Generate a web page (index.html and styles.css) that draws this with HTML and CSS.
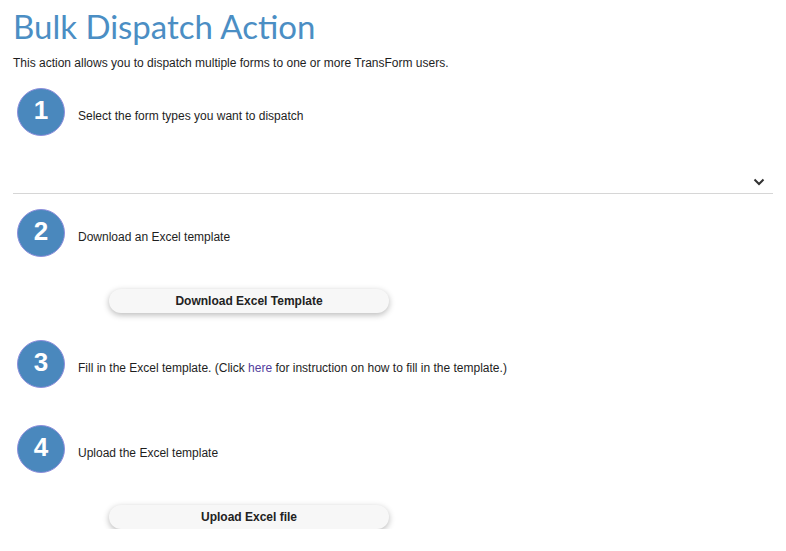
FILE: index.html
```html
<!DOCTYPE html>
<html>
<head>
<meta charset="utf-8">
<link rel="stylesheet" href="styles.css">
</head>
<body>
<h1 class="title">Bulk Dispatch Action</h1>
<p class="intro">This action allows you to dispatch multiple forms to one or more TransForm users.</p>

<div class="step step-1">
  <div class="num">1</div>
  <div class="label">Select the form types you want to dispatch</div>
</div>
<div class="select">
  <svg class="chev" width="12" height="8" viewBox="0 0 12 8"><path d="M1.5 1.5 L6 6 L10.5 1.5" fill="none" stroke="#333" stroke-width="2"/></svg>
</div>

<div class="step step-2">
  <div class="num">2</div>
  <div class="label">Download an Excel template</div>
</div>
<div class="btn-wrap btn-wrap-1"><button class="btn">Download Excel Template</button></div>

<div class="step step-3">
  <div class="num">3</div>
  <div class="label">Fill in the Excel template. (Click <a class="link" href="#">here</a> for instruction on how to fill in the template.)</div>
</div>

<div class="step step-4">
  <div class="num">4</div>
  <div class="label">Upload the Excel template</div>
</div>
<div class="btn-wrap btn-wrap-2"><button class="btn">Upload Excel file</button></div>
</body>
</html>
```
FILE: styles.css
```css
html, body { background: #fff; }
body {
  margin: 0;
  padding: 6px 13px 0 13px;
  font-family: "Liberation Sans", Arial, sans-serif;
  font-size: 12px;
  color: #1e1e1e;
}
.title {
  margin: 0;
  font-family: Lato, "Segoe UI", sans-serif;
  font-weight: normal;
  font-size: 33px;
  line-height: 40px;
  color: #4b8ec4;
}
.intro {
  margin: 9px 0 0 0;
  line-height: 16px;
}
.step {
  display: flex;
  align-items: center;
  gap: 13px;
  padding-left: 4px;
}
.step-1 { margin-top: 17px; }
.step-2 { margin-top: 15px; }
.step-3 { margin-top: 27px; }
.step-4 { margin-top: 37px; }
.num {
  width: 46px;
  height: 43px;
  padding-bottom: 3px;
  border-radius: 50%;
  background: #4a88bd;
  border: 1px solid #8e8fdc;
  color: #fff;
  font-weight: bold;
  font-size: 26px;
  display: flex;
  align-items: center;
  justify-content: center;
  flex: none;
}
.label {
  padding-top: 8px;
  line-height: 16px;
}
.link { color: #53409e; text-decoration: none; }
.select {
  margin-top: 29px;
  height: 29px;
  border-bottom: 1px solid #d6d6d6;
  display: flex;
  justify-content: flex-end;
  align-items: center;
  padding-right: 8px;
  width: 760px;
  box-sizing: border-box;
}
.chev { display: block; margin-top: 6px; }
.btn-wrap { padding-left: 96px; }
.btn-wrap-1 { margin-top: 32px; }
.btn-wrap-2 { margin-top: 32px; }
.btn {
  width: 280px;
  height: 24px;
  border: none;
  border-radius: 12px;
  background: #f7f7f7;
  box-shadow: 0 2px 6px rgba(0,0,0,0.28);
  font-family: "Liberation Sans", Arial, sans-serif;
  font-size: 12px;
  font-weight: bold;
  color: #222;
  padding: 0;
}
```
